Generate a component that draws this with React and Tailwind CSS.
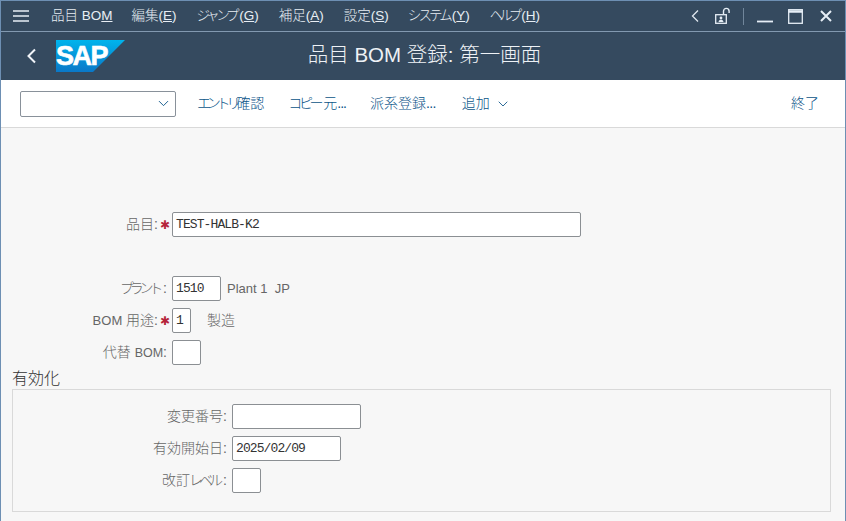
import { ChevronDown } from 'lucide-react';

const FONT = "font-['Liberation_Sans','Noto_Sans_CJK_JP',sans-serif]";

function MenuBar() {
    return (
        <div className="flex h-[31px] items-center border-b border-[#8299b0] bg-[#354a5f] pl-[12px] pr-[13px] text-[13.5px] font-light text-[#e8eef4]">
            <svg width="16" height="14" viewBox="0 0 16 14" className="shrink-0">
                <path d="M0 2h16M0 7h16M0 12h16" stroke="#e6eef6" strokeWidth="1.6" fill="none" />
            </svg>
            <div className="ml-[22px] flex whitespace-nowrap">
                <span>品目 BO<span className="underline">M</span></span>
                <span className="ml-[19px]">編集(<span className="underline">E</span>)</span>
                <span className="ml-[20px]"><span className="tracking-[-3.3px]">ジャンプ</span><span className="ml-[3px]">(<span className="underline">G</span>)</span></span>
                <span className="ml-[20px]">補足(<span className="underline">A</span>)</span>
                <span className="ml-[20px]">設定(<span className="underline">S</span>)</span>
                <span className="ml-[19px]"><span className="tracking-[-2.9px]">システム</span><span className="ml-[2px]">(<span className="underline">Y</span>)</span></span>
                <span className="ml-[20px]"><span className="tracking-[-4px]">ヘルプ</span><span className="ml-[3px]">(<span className="underline">H</span>)</span></span>
            </div>
            <div className="ml-auto flex items-center">
                <svg width="10" height="14" viewBox="0 0 10 14" fill="none">
                    <path d="M8 1.5 2.5 7 8 12.5" stroke="#dfe7ef" strokeWidth="1.3" />
                </svg>
                <svg width="18" height="18" viewBox="0 0 18 18" fill="none" className="ml-[14px]">
                    <path d="M9.5 7V4.2a2.8 2.8 0 0 1 5.6 0V6" stroke="#e6eef6" strokeWidth="1.4" />
                    <rect x="1.7" y="7.7" width="10.6" height="8.6" stroke="#e6eef6" strokeWidth="1.3" />
                    <circle cx="7" cy="11" r="1.4" fill="#e6eef6" />
                    <path d="M4.5 15c.3-1.8 1.2-2.3 2.5-2.3s2.2.5 2.5 2.3z" fill="#e6eef6" />
                </svg>
                <div className="ml-[11px] h-[17px] w-px bg-[#71869b]" />
                <svg width="16" height="14" viewBox="0 0 16 14" className="ml-[13px]">
                    <path d="M0 12.5h16" stroke="#e6eef6" strokeWidth="1.8" />
                </svg>
                <svg width="15" height="15" viewBox="0 0 15 15" fill="none" className="ml-[15px]">
                    <rect x=".7" y=".7" width="13.6" height="13.6" stroke="#e6eef6" strokeWidth="1.3" />
                    <path d="M.5 2.5h14" stroke="#e6eef6" strokeWidth="2.5" />
                </svg>
                <svg width="12" height="12" viewBox="0 0 12 12" fill="none" className="ml-[17px]">
                    <path d="M1 1l10 10M11 1 1 11" stroke="#e6eef6" strokeWidth="2" />
                </svg>
            </div>
        </div>
    );
}

function SapLogo() {
    return (
        <div className="relative ml-[19px] h-[32px] w-[69px]">
            <svg width="69" height="32" viewBox="0 0 69 32">
                <defs>
                    <linearGradient id="sapBlue" x1="0" y1="0" x2="0" y2="1">
                        <stop offset="0" stopColor="#00b4ec" />
                        <stop offset="1" stopColor="#0a78c8" />
                    </linearGradient>
                </defs>
                <polygon points="0,0 69,0 37,32 0,32" fill="url(#sapBlue)" />
            </svg>
            <span className="absolute left-[0px] top-[1px] font-['Liberation_Sans',sans-serif] text-[27px] leading-[30px] font-bold tracking-[-1.5px] text-white [-webkit-text-stroke:0.6px_white]">
                SAP
            </span>
        </div>
    );
}

function TitleBar() {
    return (
        <div className="relative flex h-[48px] items-center bg-[#354a5f] pl-[25px]">
            <svg width="11" height="16" viewBox="0 0 11 16" fill="none">
                <path d="M9 1.5 2.5 8 9 14.5" stroke="#f0f4f8" strokeWidth="2" />
            </svg>
            <SapLogo />
            <h1 className="absolute inset-x-0 -mt-[2px] pl-[3px] text-center text-[20.5px] font-light text-[#eef2f6]">
                品目 BOM 登録: 第一画面
            </h1>
        </div>
    );
}

function Toolbar() {
    const linkCls = 'text-[14px] font-light text-[#0a5488] whitespace-nowrap';
    return (
        <div className="flex h-[48px] items-center border-b border-[#d9d9d9] bg-white pl-[19px] pr-[26px]">
            <div className="flex h-[26px] w-[156px] items-center justify-end rounded-[2px] border border-[#89919a] pr-[3px]">
                <ChevronDown size={17} strokeWidth={1.3} className="text-[#0a5488]" />
            </div>
            <span className={`${linkCls} ml-[21px]`}><span className="tracking-[-4.2px]">エントリ</span>確認</span>
            <span className={`${linkCls} ml-[24px]`}><span className="tracking-[-3.3px]">コピー</span><span className="ml-[3px]">元</span><span className="tracking-[-1px]">...</span></span>
            <span className={`${linkCls} ml-[24px]`}>派系登録<span className="tracking-[-0.6px]">...</span></span>
            <span className={`${linkCls} ml-[26px]`}>追加</span>
            <ChevronDown size={16} strokeWidth={1.3} className="ml-[5px] text-[#0a5488]" />
            <span className={`${linkCls} ml-auto`}>終了</span>
        </div>
    );
}

function Input({ width, value }) {
    return (
        <div
            className={`${width} h-[25px] shrink-0 rounded-[2px] border border-[#8b8f93] bg-white pl-[3px] font-['Liberation_Mono',monospace] text-[13px] leading-[23px] tracking-[-0.9px] text-[#333]`}
        >
            {value}
        </div>
    );
}

function Row({ label, required, labelWidth, children }) {
    return (
        <div className="flex h-[25px] items-center">
            <div className={`${labelWidth} flex shrink-0 items-center justify-end text-[14px] font-light whitespace-nowrap text-[#666]`}>
                <span>{label}:</span>
                {required && <span className="ml-[2px] w-[12px] font-['DejaVu_Sans',sans-serif] text-[12px] leading-none font-bold text-[#b5243a]">✱</span>}
                {!required && <span className="w-[5px]" />}
            </div>
            {children}
        </div>
    );
}

function App() {
    return (
        <div className={`${FONT} flex h-[521px] w-[846px] flex-col overflow-hidden border-t border-l border-r border-[#6d8fb3] bg-[#f7f7f7]`}>
            <MenuBar />
            <TitleBar />
            <Toolbar />
            <main className="flex flex-1 flex-col pl-[11px] pr-[14px]">
                <div className="mt-[84px]">
                    <Row label="品目" required labelWidth="w-[160px]">
                        <Input width="w-[409px]" value="TEST-HALB-K2" />
                    </Row>
                </div>
                <div className="mt-[39px] flex flex-col gap-[7px]">
                    <Row label={<><span className="tracking-[-4.2px]">プラント</span><span className="ml-[4px]" /></>} labelWidth="w-[160px]">
                        <Input width="w-[49px]" value="1510" />
                        <span className="ml-[6px] text-[13px] font-light text-[#666]">Plant 1&nbsp; JP</span>
                    </Row>
                    <Row label={<><span className="text-[13px]">BOM</span> 用途</>} required labelWidth="w-[160px]">
                        <Input width="w-[19px]" value="1" />
                        <span className="ml-[16px] text-[14px] font-light text-[#666]">製造</span>
                    </Row>
                    <Row label={<>代替 <span className="text-[12.5px]">BOM</span></>} labelWidth="w-[160px]">
                        <Input width="w-[29px]" value="" />
                    </Row>
                </div>
                <h2 className="mt-[3px] h-[21px] text-[16px] leading-[21px] font-light text-[#333]">有効化</h2>
                <section className="flex h-[123px] w-[819px] flex-col gap-[7px] border border-[#d9d9d9] pt-[14px]">
                    <Row label="変更番号" labelWidth="w-[219px]">
                        <Input width="w-[129px]" value="" />
                    </Row>
                    <Row label="有効開始日" labelWidth="w-[219px]">
                        <Input width="w-[109px]" value="2025/02/09" />
                    </Row>
                    <Row label={<>改訂<span className="-ml-[1px] tracking-[-4px]">レベル</span><span className="ml-[4px]" /></>} labelWidth="w-[219px]">
                        <Input width="w-[29px]" value="" />
                    </Row>
                </section>
            </main>
        </div>
    );
}

export default App;
